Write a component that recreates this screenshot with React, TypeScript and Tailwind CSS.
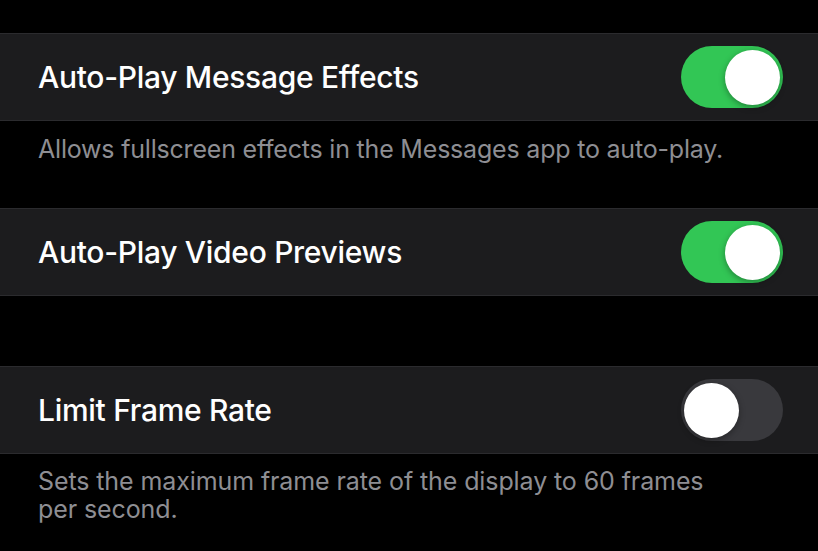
import React from "react"

function Toggle({ on }: { on: boolean }) {
  return (
    <div
      className={`relative w-[102px] h-[62px] rounded-full shrink-0 ${
        on ? "bg-[#32c655]" : "bg-[#39393d]"
      }`}
    >
      <div
        className={`absolute top-[4px] w-[55px] h-[55px] rounded-full bg-white shadow-[0_2px_6px_rgba(0,0,0,0.35)] ${
          on ? "right-[3px]" : "left-[3px]"
        }`}
      />
    </div>
  )
}

function Row({ label, on }: { label: string; on: boolean }) {
  return (
    <div className="h-[88px] bg-[#1c1c1e] border-y border-[#2b2b2e] flex items-center justify-between pl-[38px] pr-[35px]">
      <span className="text-[30px] font-medium text-white tracking-[-0.3px]">{label}</span>
      <Toggle on={on} />
    </div>
  )
}

export default function App() {
  return (
    <div
      className="w-[818px] h-[551px] bg-black overflow-hidden"
      style={{ fontFamily: "Inter, 'Noto Sans', sans-serif" }}
    >
      <div className="h-[33px]" />
      <Row label="Auto-Play Message Effects" on={true} />
      <div className="h-[87px] pl-[38px] pt-[14px]">
        <p className="text-[25px] leading-[28px] text-[#8e8e93] tracking-[-0.2px]">
          Allows fullscreen effects in the Messages app to auto-play.
        </p>
      </div>
      <Row label="Auto-Play Video Previews" on={true} />
      <div className="h-[70px]" />
      <Row label="Limit Frame Rate" on={false} />
      <div className="pl-[38px] pt-[13px]">
        <p className="max-w-[680px] text-[25px] leading-[28px] text-[#8e8e93] tracking-[-0.1px]">
          Sets the maximum frame rate of the display to 60 frames per second.
        </p>
      </div>
    </div>
  )
}
